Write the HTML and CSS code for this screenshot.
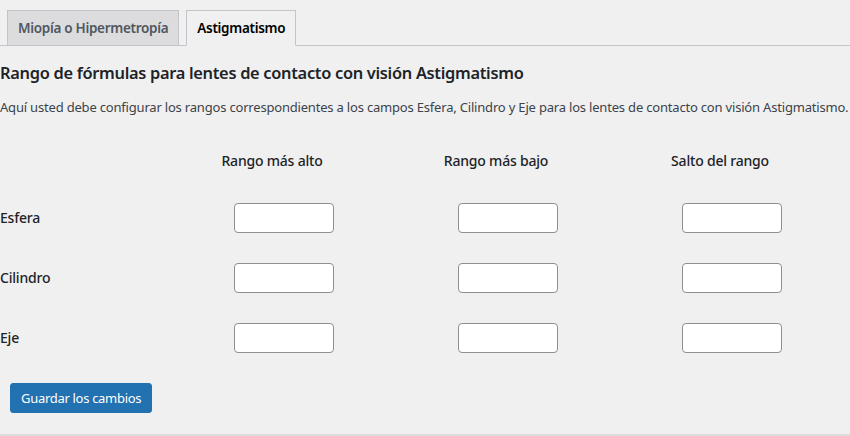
FILE: index.html
```html
<!DOCTYPE html>
<html lang="es">
<head>
<meta charset="utf-8">
<title>Astigmatismo</title>
<link rel="stylesheet" href="styles.css">
</head>
<body>
<div class="page">
  <nav class="tabs">
    <a class="tab" href="#">Miopía o Hipermetropía</a>
    <a class="tab tab-active" href="#">Astigmatismo</a>
  </nav>
  <h2 class="title">Rango de fórmulas para lentes de contacto con visión Astigmatismo</h2>
  <p class="desc">Aquí usted debe configurar los rangos correspondientes a los campos Esfera, Cilindro y Eje para los lentes de contacto con visión Astigmatismo.</p>
  <form class="ranges">
    <div class="grid">
      <div class="head"></div>
      <div class="head">Rango más alto</div>
      <div class="head">Rango más bajo</div>
      <div class="head">Salto del rango</div>

      <div class="label">Esfera</div>
      <div class="cell"><input class="field" type="text"></div>
      <div class="cell"><input class="field" type="text"></div>
      <div class="cell"><input class="field" type="text"></div>

      <div class="label">Cilindro</div>
      <div class="cell"><input class="field" type="text"></div>
      <div class="cell"><input class="field" type="text"></div>
      <div class="cell"><input class="field" type="text"></div>

      <div class="label">Eje</div>
      <div class="cell"><input class="field" type="text"></div>
      <div class="cell"><input class="field" type="text"></div>
      <div class="cell"><input class="field" type="text"></div>
    </div>
    <div class="actions">
      <button class="btn-primary" type="button">Guardar los cambios</button>
    </div>
  </form>
</div>
</body>
</html>
```
FILE: styles.css
```css
html, body {
  margin: 0;
  padding: 0;
  background: #f0f0f1;
}
body {
  font-family: "Noto Sans", "Open Sans", sans-serif;
  color: #3c434a;
  font-size: 13px;
  height: 436px;
  overflow: hidden;
}
.page {
  height: 434px;
  border-bottom: 2px solid #dcdcde;
}
.tabs {
  display: flex;
  padding-top: 10px;
  border-bottom: 1px solid #c3c4c7;
}
.tab {
  display: block;
  margin-left: 7px;
  margin-bottom: -1px;
  padding: 5px 10px;
  border: 1px solid #c3c4c7;
  background: #dcdcde;
  color: #50575e;
  font-size: 13.5px;
  letter-spacing: -0.3px;
  line-height: 24px;
  font-weight: 600;
  text-decoration: none;
  white-space: nowrap;
}
.tab-active {
  background: #f0f0f1;
  border-bottom-color: #f0f0f1;
  color: #000;
}
.title {
  margin: 15px 0 0;
  font-size: 16.4px;
  letter-spacing: -0.3px;
  line-height: 24px;
  font-weight: 600;
  color: #1d2327;
  white-space: nowrap;
}
.desc {
  margin: 12px 0 0;
  font-size: 13px;
  letter-spacing: -0.19px;
  line-height: 20px;
  white-space: nowrap;
}
.ranges {
  margin: 0;
}
.grid {
  display: grid;
  grid-template-columns: 160px 224px 224px 224px;
  grid-template-rows: 22px 30px 30px 30px;
  row-gap: 30px;
  margin-top: 34px;
}
.head {
  font-size: 14px;
  letter-spacing: -0.2px;
  line-height: 20px;
  font-weight: 500;
  color: #1d2327;
  text-align: center;
  align-self: start;
}
.label {
  font-size: 14px;
  letter-spacing: -0.2px;
  line-height: 20px;
  font-weight: 500;
  color: #1d2327;
  align-self: center;
}
.cell {
  padding-left: 74px;
}
.field {
  box-sizing: border-box;
  width: 100px;
  height: 30px;
  margin: 0;
  padding: 0 8px;
  border: 1px solid #8c8f94;
  border-radius: 4px;
  background: #fff;
  font: inherit;
}
.actions {
  padding: 30px 0 0 10px;
}
.btn-primary {
  display: inline-block;
  height: 30px;
  padding: 0 10px;
  border: 1px solid #2271b1;
  border-radius: 3px;
  background: #2271b1;
  color: #fff;
  font-family: inherit;
  font-size: 13px;
  letter-spacing: -0.3px;
  line-height: 28px;
  cursor: pointer;
}
```
